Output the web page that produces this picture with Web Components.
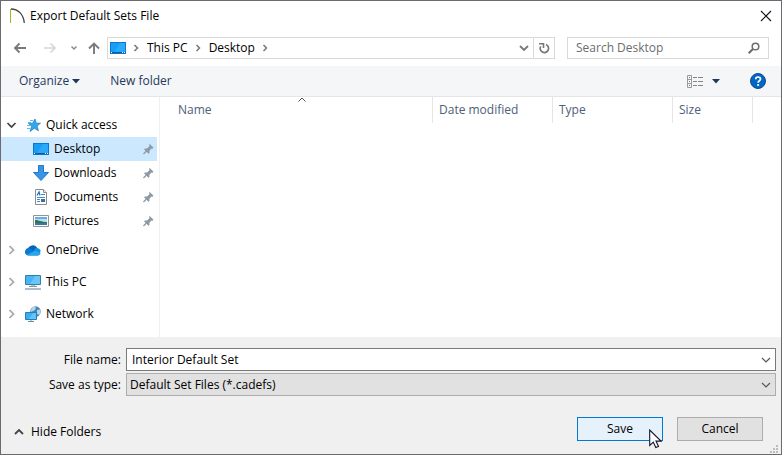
<!DOCTYPE html>
<html lang="en">
<head>
<meta charset="utf-8">
<meta name="viewport" content="width=device-width, initial-scale=1">
<title>Export Default Sets File</title>
<style>
    body {
        margin: 0;
        font: 12px/16px "Open Sans", "Noto Sans", sans-serif;
        color: #000;
        background: #fff;
    }
</style>
</head>
<body>
<export-dialog></export-dialog>

<script>
const ICONS = {
    app: [16, 16, `
        <path d="M2 1C9 1 14.500 6 15.300 15" stroke="#444" stroke-width="1.300" fill="none"/>
        <path d="M1 1h1v14H1z" fill="#8fc31f"/>`],
    close: [12, 12, `<path d="M1 1l10 10M11 1L1 11" stroke="#111" stroke-width="1.100" fill="none"/>`],
    back: [14, 12, `<path d="M13 6H2M6.500 1.500L2 6l4.500 4.500" stroke="#7a7a7a" stroke-width="1.900" fill="none"/>`],
    forward: [14, 12, `<path d="M1 6h11M7.500 1.500L12 6l-4.500 4.500" stroke="#d5d5d5" stroke-width="1.600" fill="none"/>`],
    up: [14, 12, `<path d="M7 12V2M2 6.500L7 1.500l5 5" stroke="#7a7a7a" stroke-width="1.900" fill="none"/>`],
    recent: [8, 6, `<path d="M1.500 1.500L4 4l2.500-2.500" stroke="#8a8a8a" stroke-width="1.500" fill="none"/>`],
    crumb: [6, 8, `<path d="M1.500 1L4.500 4l-3 3" stroke="#777" stroke-width="1.500" fill="none"/>`],
    down: [10, 8, `<path d="M1 2l4 4 4-4" stroke="#7a7a7a" stroke-width="1.900" fill="none"/>`],
    open: [12, 12, `<path d="M2.500 4L6.500 8l4-4" stroke="#404040" stroke-width="1.700" fill="none"/>`],
    closed: [12, 12, `<path d="M4.500 2L8.500 6l-4 4" stroke="#a6a6a6" stroke-width="1.700" fill="none"/>`],
    hide: [10, 8, `<path d="M1 6l4-4 4 4" stroke="#444" stroke-width="1.800" fill="none"/>`],
    drop: [10, 8, `<path d="M1 2l4 4 4-4" stroke="#555" stroke-width="1.200" fill="none"/>`],
    sort: [8, 5, `<path d="M0.500 4.500L4 1l3.500 3.500" stroke="#555" stroke-width="1" fill="none"/>`],
    caret: [8, 5, `<path d="M0 0h8L4 4.500z" fill="#1e395b"/>`],
    refresh: [12, 12, `
        <path d="M8 2.500A4.200 4.200 0 1 1 2.700 4.300" stroke="#777" stroke-width="1.700" fill="none"/>
        <path d="M1 1.800h4.500V6" stroke="#777" stroke-width="1.600" fill="none"/>`],
    search: [12, 12, `
        <circle cx="7.500" cy="4.500" r="3.300" stroke="#6d6d6d" stroke-width="1.500" fill="none"/>
        <path d="M5 7l-4.300 4.300" stroke="#6d6d6d" stroke-width="2" fill="none"/>`],
    view: [16, 13, `
        <path d="M.5.5h4v12h-4zM.5 4.500h4M.5 8.500h4" stroke="#9a9a9a" fill="none"/>
        <path d="M2 2h1v1H2z" fill="#777"/>
        <path d="M2 6h1v1H2z" fill="#3290e0"/>
        <path d="M2 10h1v1H2z" fill="#d04a2a"/>
        <path d="M6 2.500h4M11 2.500h5M6 6.500h4M11 6.500h5M6 10.500h4M11 10.500h5" stroke="#858585" fill="none"/>`],
    help: [16, 16, `
        <circle cx="8" cy="8" r="7.500" fill="#0067c8" stroke="#164a82"/>
        <path d="M5.700 6.200C5.700 3.300 10.500 3.300 10.500 6c0 1.800-2.400 1.700-2.400 3.800" stroke="#fff" stroke-width="1.700" fill="none"/>
        <path d="M7.200 11h1.900v1.900H7.200z" fill="#fff"/>`],
    desktop: [16, 12, `
        <path d="M0 0h16v12H0z" fill="#0a78d0"/>
        <path d="M1 1h14v9H1z" fill="#189cf4"/>
        <path d="M10 1h5v9H4z" fill="#2baafc"/>
        <path d="M1 10h14v1H1z" fill="#075a9e"/>
        <path d="M1 10h1v1H1zM12 10h1v1h-1zM14 10h1v1h-1z" fill="#fff"/>`],
    star: [16, 16, `
        <path d="M10 2l1.200 4.200h4.300l-3.500 2.800 1.500 4.800-4-2.600L5 14.500l1.700-5.300L3.500 6.500l4.200-.3z" fill="#35a6ec" stroke="#1778bd" stroke-width=".7"/>
        <path d="M5 3.500h3M3 5.500h3M2 8.500h4M2 11.500h3" stroke="#5db9f0" fill="none"/>`],
    download: [16, 16, `<path d="M5.500.5h5v7h5L8 15.500.5 7.500h5z" fill="#3795e8" stroke="#2277c8"/>`],
    document: [16, 16, `
        <path d="M2.500.5h8l3 3v12h-11z" fill="#fff" stroke="#8d8d8d"/>
        <path d="M10.500.5v3h3" fill="#eee" stroke="#8d8d8d"/>
        <path d="M4 6.500L6 3l1 3.500" stroke="#2675bd" stroke-width="1.300" fill="none"/>
        <path d="M8 5.500h4M4 8.500h8M4 10.500h3M4 12.500h3" stroke="#3d8dcc" fill="none"/>
        <path d="M8 10h4v3H8z" fill="#33719f"/>`],
    picture: [16, 12, `
        <path d="M.5.5h15v11H.5z" fill="#fff" stroke="#949494"/>
        <path d="M2 2h12v8H2z" fill="#b5def5"/>
        <path d="M2 2h12v2H2z" fill="#67aee1"/>
        <path d="M2 5c4 0 6 2 12 2v1H2z" fill="#33734b"/>
        <path d="M2 8h12v2H2z" fill="#3678a8"/>`],
    cloud: [16, 12, `
        <path d="M2.500 5A5.500 5.500 0 0 1 12 3.500l-1 5-9 1z" fill="#0364b8"/>
        <path d="M10 4.500a4 4 0 0 1 5.500 2L15 10H7z" fill="#1490df"/>
        <path d="M0 7.500A3.500 3.500 0 0 1 4.500 4.200L14 10l-1 1.500H3.500A3.700 3.700 0 0 1 0 7.500z" fill="#0f78d4"/>
        <path d="M2 11l8-4.500 5.500 2.700c-.3 1.300-1.200 2.300-2.500 2.300H3.500z" fill="#28a8ea"/>`],
    pc: [16, 15, `
        <path d="M.5.5h15v9H.5z" fill="#45b5f5" stroke="#347fa8"/>
        <path d="M10 1h5v8H5z" fill="#69c6fc"/>
        <path d="M6 10.500h4v1H6z" fill="#5b8ca8"/>
        <path d="M4 11.500h8" stroke="#7897a9" fill="none"/>
        <path d="M0 14h16" stroke="#8fa0af" stroke-width="1.400" fill="none"/>`],
    network: [16, 16, `
        <circle cx="10.500" cy="5.500" r="5.200" fill="#4584b5"/>
        <path d="M7 2c2-2 3-1 4-.3L10 4 8 5 6 6c0-2 .2-3 1-4zM12 4l3-.5c1 2 .5 4-.6 5.500L12 8z" fill="#b3d7e8"/>
        <path d="M.5 6.500h11v7H.500z" fill="#38aff5" stroke="#287faf"/>
        <path d="M8 7h3v6H4z" fill="#62c4fc"/>
        <path d="M6 14v1M3 15.500h6" stroke="#6b8fa5" fill="none"/>`],
    pin: [11, 12, `
        <path d="M6.500.8l4 4-1 .9-.9-.1-2.200 2.200.1 2.200-1 .8L1 6.300l.9-.9 2.200.1 2.300-2.200-.1-1.600z" fill="#8d9aa6"/>
        <path d="M3.700 7.700L.5 11" stroke="#8d9aa6" stroke-width="1.300" fill="none"/>`],
    grip: [9, 9, `<path d="M6 0h2v2H6zM3 3h2v2H3zM6 3h2v2H6zM0 6h2v2H0zM3 6h2v2H3zM6 6h2v2H6z" fill="#bdbdbd"/>`],
    pointer: [13, 20, `<path d="M.7 1v15.500l3.600-3.400 2.500 5.500 2.700-1.200-2.500-5.300h5z" fill="#fff" stroke="#15152a" stroke-width="1.100"/>`]
};

const BUTTON_RESET = `
    button {
        display: flex;
        align-items: center;
        margin: 0;
        padding: 0;
        border: 0;
        background: none;
        color: inherit;
        font: inherit;
    }
`;

class UiIcon extends HTMLElement {
    constructor() {
        super();
        this.attachShadow({ mode: 'open' });
    }

    connectedCallback() {
        const [w, h, shapes] = ICONS[this.getAttribute('name')];
        this.shadowRoot.innerHTML = `
        <style>
            :host { display: inline-flex; flex: none; pointer-events: none; }
            svg { display: block; }
        </style>
        <svg width="${w}" height="${h}" viewBox="0 0 ${w} ${h}" aria-hidden="true">${shapes}</svg>
        `;
    }
}

class TitleBar extends HTMLElement {
    constructor() {
        super();
        this.attachShadow({ mode: 'open' });
        this.shadowRoot.innerHTML = `
        <style>
            :host {
                display: flex;
                align-items: center;
                gap: 5px;
                padding: 7px 9px 6px 8px;
            }
            h1 { flex: 1; margin: 0; font: inherit; }
            ${BUTTON_RESET}
        </style>
        <ui-icon name="app"></ui-icon>
        <h1><slot></slot></h1>
        <button type="button" aria-label="Close"><ui-icon name="close"></ui-icon></button>
        `;
    }
}

class AddressBar extends HTMLElement {
    constructor() {
        super();
        this.attachShadow({ mode: 'open' });
        this.shadowRoot.innerHTML = `
        <style>
            :host {
                display: flex;
                align-items: center;
                gap: 6px;
                padding: 7px 12px 7px;
            }
            ${BUTTON_RESET}
            .history { display: flex; align-items: center; gap: 13px; }
            .step { display: flex; align-items: center; gap: 16px; }
            .more { display: flex; align-items: center; gap: 9px; }
            .path, .search {
                display: flex;
                box-sizing: border-box;
                height: 22px;
                border: 1px solid #d9d9d9;
            }
            .path { flex: 1; min-width: 0; align-items: center; }
            ol {
                display: flex;
                flex: 1;
                align-items: center;
                gap: 7px;
                margin: 0;
                padding: 0 2px;
                list-style: none;
            }
            li { display: flex; align-items: center; gap: 8px; }
            .path > button { align-self: stretch; padding: 0 4px; }
            .path > .refresh { border-left: 1px solid #d9d9d9; }
            .search { width: 202px; align-items: center; margin-left: 6px; padding: 0 8px; }
            input {
                flex: 1;
                min-width: 0;
                padding: 0;
                border: 0;
                outline: 0;
                background: none;
                font: inherit;
            }
            input::placeholder { color: #6d6d6d; opacity: 1; }
        </style>
        <div class="history">
            <div class="step">
                <button type="button" aria-label="Back"><ui-icon name="back"></ui-icon></button>
                <button type="button" aria-label="Forward" disabled><ui-icon name="forward"></ui-icon></button>
            </div>
            <div class="more">
                <button type="button" aria-label="Recent locations"><ui-icon name="recent"></ui-icon></button>
                <button type="button" aria-label="Up"><ui-icon name="up"></ui-icon></button>
            </div>
        </div>
        <nav class="path" aria-label="Path">
            <ol>
                <li><ui-icon name="desktop"></ui-icon></li>
                <li><ui-icon name="crumb"></ui-icon><button type="button">This PC</button></li>
                <li><ui-icon name="crumb"></ui-icon><button type="button">Desktop</button></li>
                <li><ui-icon name="crumb"></ui-icon></li>
            </ol>
            <button type="button" aria-label="Previous locations"><ui-icon name="down"></ui-icon></button>
            <button type="button" class="refresh" aria-label="Refresh"><ui-icon name="refresh"></ui-icon></button>
        </nav>
        <div class="search">
            <input type="text" aria-label="Search Desktop" placeholder="Search Desktop">
            <button type="button" aria-label="Search"><ui-icon name="search"></ui-icon></button>
        </div>
        `;
    }
}

class CommandBar extends HTMLElement {
    constructor() {
        super();
        this.attachShadow({ mode: 'open' });
        this.shadowRoot.innerHTML = `
        <style>
            :host {
                display: flex;
                align-items: center;
                gap: 30px;
                height: 30px;
                padding: 0 15px 0 18px;
                border-bottom: 1px solid #e5e5e5;
                background: #f5f6f7;
                color: #1e395b;
            }
            ${BUTTON_RESET}
            .organize { gap: 3px; }
            .view { gap: 9px; margin-left: auto; }
        </style>
        <button type="button" class="organize">Organize<ui-icon name="caret"></ui-icon></button>
        <button type="button">New folder</button>
        <button type="button" class="view" aria-label="Change your view"><ui-icon name="view"></ui-icon><ui-icon name="caret"></ui-icon></button>
        <button type="button" aria-label="Help"><ui-icon name="help"></ui-icon></button>
        `;
    }
}

class TreeItem extends HTMLElement {
    constructor() {
        super();
        this.attachShadow({ mode: 'open' });
    }

    connectedCallback() {
        const state = this.getAttribute('state');
        this.shadowRoot.innerHTML = `
        <style>
            :host { display: block; }
            :host([selected]) { background: #cce8ff; }
            ${BUTTON_RESET}
            button {
                box-sizing: border-box;
                width: 100%;
                height: 24px;
                padding: 0 3px 0 4px;
                text-align: left;
            }
            :host([pinned]) button { padding-left: 32px; }
            .icon { display: flex; justify-content: center; width: 16px; }
            .state { margin-right: 8px; }
            .label { flex: 1; padding-left: 5px; }
        </style>
        <button type="button">
            ${state ? `<ui-icon class="state" name="${state}"></ui-icon>` : ''}
            <span class="icon"><ui-icon name="${this.getAttribute('icon')}"></ui-icon></span>
            <span class="label"><slot></slot></span>
            ${this.hasAttribute('pinned') ? '<ui-icon name="pin"></ui-icon>' : ''}
        </button>
        `;
    }
}

class FolderTree extends HTMLElement {
    constructor() {
        super();
        this.attachShadow({ mode: 'open' });
        this.onClick = this.onClick.bind(this);
        this.shadowRoot.innerHTML = `
        <style>
            :host {
                display: flex;
                flex-direction: column;
                gap: 8px;
                box-sizing: border-box;
                width: 159px;
                padding: 16px 2px 11px 0;
                border-right: 1px solid #f0f0f0;
            }
            .group { margin-bottom: -3px; }
        </style>
        <div class="group">
            <tree-item icon="star" state="open">Quick access</tree-item>
            <tree-item icon="desktop" pinned selected>Desktop</tree-item>
            <tree-item icon="download" pinned>Downloads</tree-item>
            <tree-item icon="document" pinned>Documents</tree-item>
            <tree-item icon="picture" pinned>Pictures</tree-item>
        </div>
        <tree-item icon="cloud" state="closed">OneDrive</tree-item>
        <tree-item icon="pc" state="closed">This PC</tree-item>
        <tree-item icon="network" state="closed">Network</tree-item>
        `;
    }

    connectedCallback() {
        this.shadowRoot.addEventListener('click', this.onClick);
    }

    disconnectedCallback() {
        this.shadowRoot.removeEventListener('click', this.onClick);
    }

    onClick(e) {
        const item = e.target.closest('tree-item');
        if (!item) return;
        this.shadowRoot.querySelectorAll('[selected]').forEach((el) => el.removeAttribute('selected'));
        item.setAttribute('selected', '');
    }
}

class FileList extends HTMLElement {
    constructor() {
        super();
        this.attachShadow({ mode: 'open' });
        this.shadowRoot.innerHTML = `
        <style>
            :host { display: block; overflow: hidden; }
            table { border-collapse: separate; border-spacing: 0; table-layout: fixed; width: 593px; }
            th {
                position: relative;
                box-sizing: border-box;
                height: 26px;
                padding: 0 6px;
                border-right: 1px solid #e5e5e5;
                color: #4c607a;
                font-weight: normal;
                text-align: left;
            }
            th:first-child { padding-left: 18px; }
            .name { width: 273px; }
            .wide { width: 120px; }
            .size { width: 80px; }
            .sort {
                position: absolute;
                top: 0;
                right: 0;
                left: 12px;
                justify-content: center;
            }
        </style>
        <table>
            <thead>
                <tr>
                    <th class="name" scope="col" aria-sort="ascending">Name<ui-icon class="sort" name="sort"></ui-icon></th>
                    <th class="wide" scope="col">Date modified</th>
                    <th class="wide" scope="col">Type</th>
                    <th class="size" scope="col">Size</th>
                </tr>
            </thead>
            <tbody></tbody>
        </table>
        `;
    }
}

class SaveForm extends HTMLElement {
    constructor() {
        super();
        this.attachShadow({ mode: 'open' });
        this.shadowRoot.innerHTML = `
        <style>
            :host {
                position: relative;
                display: block;
                padding: 11px 5px 13px 8px;
                background: #f0f0f0;
            }
            ${BUTTON_RESET}
            .fields {
                display: grid;
                grid-template-columns: 112px 1fr;
                column-gap: 5px;
                row-gap: 2px;
                align-items: center;
            }
            label { text-align: right; }
            .box {
                display: grid;
                grid-template-columns: 1fr 20px;
                align-items: center;
                box-sizing: border-box;
                height: 23px;
                border: 1px solid #adadad;
                background: #e1e1e1;
            }
            .combo { border-color: #7a7a7a; background: #fff; }
            input, select {
                box-sizing: border-box;
                width: 100%;
                height: 21px;
                padding: 0 5px;
                border: 0;
                outline: 0;
                background: none;
                color: inherit;
                font: inherit;
            }
            select { grid-area: 1 / 1 / 2 / 3; padding: 0 3px; appearance: none; }
            .box ui-icon { margin-left: 6px; }
            .box > ui-icon { grid-area: 1 / 2; }
            .actions {
                display: flex;
                align-items: center;
                gap: 14px;
                padding: 21px 13px 0 5px;
            }
            .hide { gap: 7px; margin: 6px auto 0 0; }
            .push {
                position: relative;
                justify-content: center;
                width: 86px;
                height: 24px;
                border: 1px solid #adadad;
                background: #e1e1e1;
            }
            .save { border-color: #0078d7; background: #e5f1fb; }
            .pointer { position: absolute; top: 11px; left: 71px; z-index: 1; }
            .grip { position: absolute; right: 2px; bottom: 0; }
        </style>
        <form>
            <div class="fields">
                <label for="name">File name:</label>
                <div class="box combo">
                    <input id="name" type="text" value="Interior Default Set">
                    <button type="button" aria-label="Previous names"><ui-icon name="drop"></ui-icon></button>
                </div>
                <label for="type">Save as type:</label>
                <div class="box">
                    <select id="type"><option>Default Set Files (*.cadefs)</option></select>
                    <ui-icon name="drop"></ui-icon>
                </div>
            </div>
            <div class="actions">
                <button type="button" class="hide"><ui-icon name="hide"></ui-icon>Hide Folders</button>
                <button type="submit" class="push save">Save<ui-icon class="pointer" name="pointer"></ui-icon></button>
                <button type="button" class="push">Cancel</button>
            </div>
        </form>
        <ui-icon class="grip" name="grip"></ui-icon>
        `;
    }

    connectedCallback() {
        this.shadowRoot.querySelector('form').addEventListener('submit', (e) => e.preventDefault());
    }
}

class ExportDialog extends HTMLElement {
    constructor() {
        super();
        this.attachShadow({ mode: 'open' });
        this.shadowRoot.innerHTML = `
        <style>
            :host {
                display: flex;
                flex-direction: column;
                box-sizing: border-box;
                min-height: 100vh;
                border: 1px solid #6b6972;
                background: #fff;
            }
            main { display: flex; flex: 1; }
            file-list { flex: 1; min-width: 0; }
        </style>
        <title-bar>Export Default Sets File</title-bar>
        <address-bar></address-bar>
        <command-bar></command-bar>
        <main>
            <folder-tree></folder-tree>
            <file-list></file-list>
        </main>
        <save-form></save-form>
        `;
    }
}

customElements.define('ui-icon', UiIcon);
customElements.define('title-bar', TitleBar);
customElements.define('address-bar', AddressBar);
customElements.define('command-bar', CommandBar);
customElements.define('tree-item', TreeItem);
customElements.define('folder-tree', FolderTree);
customElements.define('file-list', FileList);
customElements.define('save-form', SaveForm);
customElements.define('export-dialog', ExportDialog);
</script>
</body>
</html>
